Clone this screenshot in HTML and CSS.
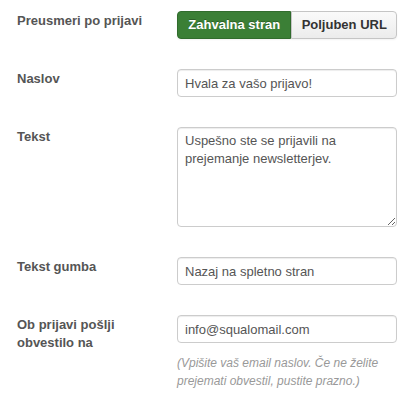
FILE: index.html
```html
<!DOCTYPE html>
<html>
<head>
<meta charset="utf-8">
<link rel="stylesheet" href="styles.css">
</head>
<body>
<form class="form">
  <div class="row">
    <label class="label">Preusmeri po prijavi</label>
    <div class="controls">
      <div class="btn-group">
        <button type="button" class="btn btn-active">Zahvalna stran</button>
        <button type="button" class="btn">Poljuben URL</button>
      </div>
    </div>
  </div>
  <div class="row">
    <label class="label">Naslov</label>
    <div class="controls"><input class="input" type="text" value="Hvala za vašo prijavo!"></div>
  </div>
  <div class="row">
    <label class="label">Tekst</label>
    <div class="controls"><textarea class="textarea">Uspešno ste se prijavili na prejemanje newsletterjev.</textarea></div>
  </div>
  <div class="row">
    <label class="label">Tekst gumba</label>
    <div class="controls"><input class="input" type="text" value="Nazaj na spletno stran"></div>
  </div>
  <div class="row">
    <label class="label">Ob prijavi pošlji<br>obvestilo na</label>
    <div class="controls">
      <input class="input" type="text" value="info@squalomail.com">
      <p class="help">(Vpišite vaš email naslov. Če ne želite prejemati obvestil, pustite prazno.)</p>
    </div>
  </div>
</form>
</body>
</html>
```
FILE: styles.css
```css
html, body {
  margin: 0;
  padding: 0;
  background: #fff;
}
body {
  font-family: "Liberation Sans", Arial, sans-serif;
  font-size: 13px;
  line-height: 18px;
  color: #555;
}
.form {
  padding: 11px 0 0 17px;
}
.row {
  display: grid;
  grid-template-columns: 160px 220px;
  margin-bottom: 30px;
}
.label {
  font-weight: bold;
  color: #555;
  padding-top: 1px;
}
.controls {
  display: flex;
  flex-direction: column;
}
.btn-group {
  display: flex;
  height: 28px;
}
.btn {
  box-sizing: border-box;
  white-space: nowrap;
  font-family: "Liberation Sans", Arial, sans-serif;
  font-size: 13px;
  font-weight: bold;
  line-height: 18px;
  margin: 0;
  padding: 0;
  width: 106px;
  height: 28px;
  border: 1px solid #c5c5c5;
  background: linear-gradient(#fafafa, #ececec);
  color: #333;
  border-radius: 0 4px 4px 0;
  box-shadow: 0 1px 2px rgba(0,0,0,0.05);
}
.btn-active {
  background: #3b7f36;
  border-color: #316c2d;
  color: #fff;
  border-radius: 4px 0 0 4px;
  width: 115px;
  text-shadow: 0 -1px 0 rgba(0,0,0,0.25);
}
.input, .textarea {
  box-sizing: border-box;
  width: 220px;
  font-family: "Liberation Sans", Arial, sans-serif;
  font-size: 13px;
  line-height: 18px;
  color: #555;
  border: 1px solid #ccc;
  border-radius: 4px;
  background: #fff;
  box-shadow: inset 0 1px 1px rgba(0,0,0,0.075);
  margin: 0;
}
.input {
  height: 28px;
  padding: 4px 7px;
}
.textarea {
  height: 100px;
  padding: 4px 7px;
  resize: vertical;
}
.help {
  margin: 11px 0 0;
  font-style: italic;
  color: #999;
  font-size: 12px;
  line-height: 18px;
}
```
